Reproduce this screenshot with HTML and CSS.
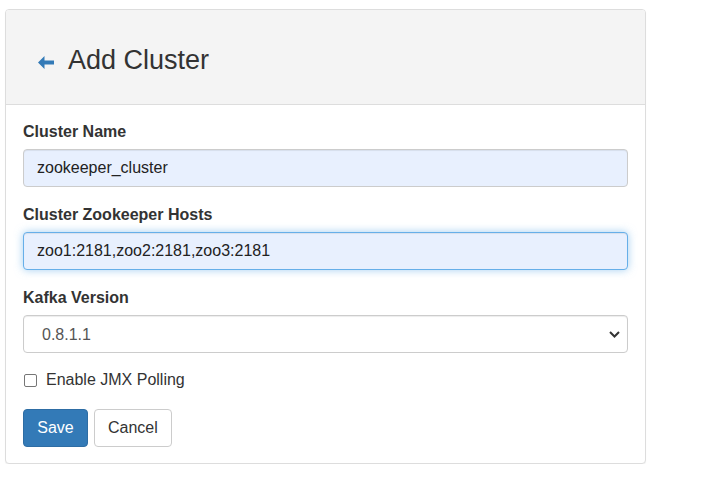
FILE: index.html
```html
<!DOCTYPE html>
<html>
<head>
<meta charset="utf-8">
<link rel="stylesheet" href="styles.css">
</head>
<body>
<div class="panel">
  <div class="panel-heading">
    <svg class="back" width="16" height="13" viewBox="0 0 16 13"><polygon points="0,6.5 6.5,0 6.5,4.5 16,4.5 16,8.5 6.5,8.5 6.5,13" fill="#337ab7"/></svg>
    <h2 class="title">Add Cluster</h2>
  </div>
  <form class="panel-body">
    <div class="group">
      <label class="lbl">Cluster Name</label>
      <input class="control autofill" type="text" value="zookeeper_cluster">
    </div>
    <div class="group">
      <label class="lbl">Cluster Zookeeper Hosts</label>
      <input class="control autofill focus" type="text" value="zoo1:2181,zoo2:2181,zoo3:2181">
    </div>
    <div class="group">
      <label class="lbl">Kafka Version</label>
      <div class="select-wrap">
        <select class="control select"><option>0.8.1.1</option></select>
        <svg class="chev" width="11" height="7" viewBox="0 0 11 7"><polyline points="1,1 5.5,5.5 10,1" fill="none" stroke="#333" stroke-width="2"/></svg>
      </div>
    </div>
    <div class="check">
      <span class="box"></span>
      <span class="check-text">Enable JMX Polling</span>
    </div>
    <div class="actions">
      <button type="button" class="btn primary">Save</button>
      <button type="button" class="btn default">Cancel</button>
    </div>
  </form>
</div>
</body>
</html>
```
FILE: styles.css
```css
* { box-sizing: border-box; }
body {
  margin: 0;
  padding: 9px 0 0 5px;
  font-family: "Liberation Sans", Arial, sans-serif;
  font-size: 16px;
  color: #333;
  background: #fff;
}
.panel {
  width: 641px;
  border: 1px solid #ddd;
  border-radius: 4px;
  box-shadow: 0 1px 1px rgba(0,0,0,.05);
  background: #fff;
}
.panel-heading {
  height: 95px;
  background: #f4f4f4;
  border-bottom: 1px solid #ddd;
  border-radius: 3px 3px 0 0;
  display: flex;
  align-items: center;
  padding: 8px 0 0 32px;
}
.back { display: block; margin-top: 2px; }
.title {
  margin: 0 0 0 14px;
  font-size: 27px;
  font-weight: normal;
  color: #333;
  line-height: 1.1;
}
.panel-body {
  margin: 0;
  padding: 15px 17px 16px 17px;
}
.group { margin-bottom: 16px; }
.group:nth-child(3) { margin-bottom: 15px; }
.lbl {
  display: block;
  font-weight: bold;
  line-height: 24px;
  margin-bottom: 5px;
}
.control {
  display: block;
  width: 100%;
  height: 38px;
  padding: 6px 13px;
  font-family: inherit;
  font-size: 16px;
  color: #222;
  border: 1px solid #ccc;
  border-radius: 4px;
  box-shadow: inset 0 1px 1px rgba(0,0,0,.075);
  background: #fff;
  outline: none;
}
.autofill { background: #e8f0fe; }
.focus {
  border-color: #66afe9;
  box-shadow: inset 0 1px 1px rgba(0,0,0,.075), 0 0 8px rgba(102,175,233,.6);
}
.select-wrap { position: relative; }
.select {
  -webkit-appearance: none;
  appearance: none;
  color: #555;
  padding-left: 18px;
}
.chev {
  position: absolute;
  right: 8px;
  top: 16px;
}
.check {
  display: flex;
  align-items: center;
  height: 24px;
  margin-bottom: 17px;
}
.box {
  width: 13px;
  height: 13px;
  border: 1px solid #767676;
  border-radius: 2px;
  margin-left: 1px;
  background: #fff;
}
.check-text { margin-left: 9px; }
.actions { display: flex; gap: 6px; }
.btn {
  height: 38px;
  padding: 6px 13px;
  font-family: inherit;
  font-size: 16px;
  border: 1px solid #ccc;
  border-radius: 4px;
  line-height: 24px;
}
.primary { background: #337ab7; border-color: #2e6da4; color: #fff; width: 65px; padding: 6px 0; }
.default { background: #fff; color: #333; }
```
